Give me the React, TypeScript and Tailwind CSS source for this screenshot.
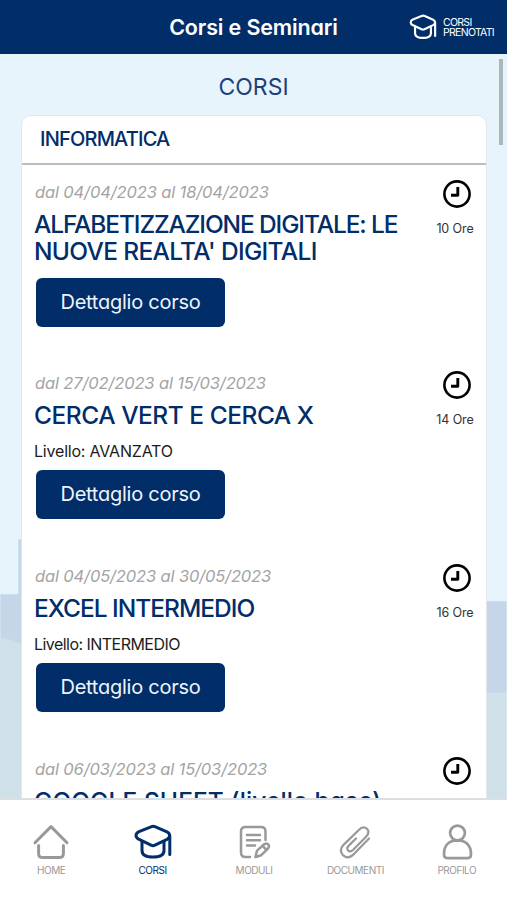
import React from 'react';
import clsx from 'clsx';

interface TitleLine {
  text: string;
  tracking: string;
}

interface Course {
  from: string;
  to: string;
  title: TitleLine[];
  level?: string;
  hours: number;
}

const courses: Course[] = [
  {
    from: '04/04/2023',
    to: '18/04/2023',
    title: [
      { text: 'ALFABETIZZAZIONE DIGITALE: LE', tracking: 'tracking-[-1.12px]' },
      { text: "NUOVE REALTA' DIGITALI", tracking: 'tracking-[-0.67px]' },
    ],
    hours: 10,
  },
  {
    from: '27/02/2023',
    to: '15/03/2023',
    title: [{ text: 'CERCA VERT E CERCA X', tracking: 'tracking-[-0.47px]' }],
    level: 'AVANZATO',
    hours: 14,
  },
  {
    from: '04/05/2023',
    to: '30/05/2023',
    title: [{ text: 'EXCEL INTERMEDIO', tracking: 'tracking-[-1px]' }],
    level: 'INTERMEDIO',
    hours: 16,
  },
  {
    from: '06/03/2023',
    to: '15/03/2023',
    title: [{ text: 'GOOGLE SHEET (livello base)', tracking: 'tracking-[0.08px]' }],
    level: 'BASE',
    hours: 12,
  },
];

interface IconProps {
  className?: string;
}

const CapIcon: React.FC<IconProps> = ({ className }) => (
  <svg viewBox="0 0 38 36" fill="none" stroke="currentColor" strokeLinecap="round" strokeLinejoin="round" className={className}>
    <path d="M17 2.8 5 7.6Q2 9 2 11.6 2 13.9 4.6 15.1L17 21.2Q19 22.2 21 21.2L33 15.4Q35.6 14 35.6 11.6 35.6 9 33 7.8L21.5 2.8Q19 1.8 17 2.8Z" />
    <path d="M8 17.5V26.5Q8 33 19 33T30 26.5V17.5" />
    <path d="M35.8 12V30.5" />
  </svg>
);

const HomeIcon: React.FC<IconProps> = ({ className }) => (
  <svg viewBox="0 0 38 36" fill="none" stroke="currentColor" strokeLinecap="round" strokeLinejoin="round" className={className}>
    <path d="M3 18.8 19 2.6 35 18.8" />
    <path d="M6.6 21.5V29.5Q6.6 33.6 10.8 33.6H27Q31.4 33.6 31.4 29.5V21.5" />
  </svg>
);

const FormIcon: React.FC<IconProps> = ({ className }) => (
  <svg viewBox="0 0 38 36" fill="none" stroke="currentColor" strokeLinecap="round" strokeLinejoin="round" className={className}>
    <path d="M15 33H10.5Q6 33 6 28.5V7.5Q6 3 10.5 3H26Q30.5 3 30.5 7.5V16" />
    <path d="M12 11H25M12 16.2H25M12 21.4H20" />
    <path d="M20.5 33 22 26.6 29.2 20.2Q31.8 18.6 33.4 20.5 34.8 22.6 32.8 24.8L26.2 31.2ZM28 22.2 31 25.6" />
  </svg>
);

const ClipIcon: React.FC<IconProps> = ({ className }) => (
  <svg viewBox="0 0 38 36" fill="none" stroke="currentColor" strokeLinecap="round" strokeLinejoin="round" className={className}>
    <path d="M33 14.5 18.2 29.8C14.6 33.6 10.5 34.3 7.2 31.4 4 28.2 4.2 24.4 7.8 20.6L22.5 6.2C25.4 3.2 28.4 2.6 31 4.8 33.4 7.4 32.6 10.2 29.8 13L17.2 25.8C15.3 27.6 13.4 27.8 12.1 26.4 10.8 25 11.2 23.2 13 21.4L20 14.5" />
  </svg>
);

const ProfileIcon: React.FC<IconProps> = ({ className }) => (
  <svg viewBox="0 0 38 36" fill="none" stroke="currentColor" strokeLinecap="round" strokeLinejoin="round" className={className}>
    <circle cx="19.5" cy="9" r="7.4" />
    <path d="M10 34.2Q6 34.2 6 30.2C6 21.3 11 16.4 19.5 16.4S33 21.3 33 30.2Q33 34.2 29 34.2Z" />
  </svg>
);

const ClockIcon: React.FC = () => (
  <svg viewBox="0 0 28 28" fill="none" stroke="#000" className="ml-[3px] size-7">
    <circle cx="14" cy="14" r="12.6" strokeWidth="2.6" />
    <path d="M14.8 7V15.3H8" strokeWidth="2.9" strokeLinejoin="round" />
  </svg>
);

const tabs = [
  { label: 'HOME', icon: HomeIcon, stroke: 'stroke-3' },
  { label: 'CORSI', icon: CapIcon, stroke: 'stroke-3' },
  { label: 'MODULI', icon: FormIcon, stroke: 'stroke-[2.5]' },
  { label: 'DOCUMENTI', icon: ClipIcon, stroke: 'stroke-[2.2]' },
  { label: 'PROFILO', icon: ProfileIcon, stroke: 'stroke-[2.7]' },
];

const CourseItem: React.FC<{ course: Course }> = ({ course }) => (
  <article className="flex justify-between pl-3 pt-[15px]">
    <div className={clsx('w-[380px]', course.level ? 'pb-[30px]' : 'pb-[29px]')}>
      <p className="pl-px text-[16.5px] italic leading-6 tracking-[-0.14px] text-[#a3a3a3]">
        dal {course.from} al {course.to}
      </p>
      <h3 className="mt-[7px] whitespace-nowrap text-[24.5px] font-medium leading-[27px] text-[#012d69]">
        {course.title.map((line) => (
          <span key={line.text} className={clsx('block', line.tracking)}>
            {line.text}
          </span>
        ))}
      </h3>
      {course.level && (
        <p
          className={clsx(
            'mt-2.5 text-[16px] leading-6 text-[#1c1c1c]',
            course.level === 'INTERMEDIO' ? 'tracking-[-0.54px]' : 'tracking-[-0.2px]'
          )}
        >
          Livello: {course.level}
        </p>
      )}
      <button
        className={clsx(
          'ml-0.5 block h-[49px] w-[189px] rounded-md bg-[#012d69] pb-0.5 text-[20px] tracking-[-0.25px] text-[#eef4fb]',
          course.level ? 'mt-[7px]' : 'mt-[13px]'
        )}
      >
        Dettaglio corso
      </button>
    </div>
    <div className="flex w-[62px] flex-col items-center">
      <ClockIcon />
      <span className="mt-[11px] text-[12.5px] leading-5 tracking-[-0.1px] text-[#333]">{course.hours} Ore</span>
    </div>
  </article>
);

export default function App() {
  return (
    <div className="flex h-[900px] w-[507px] flex-col overflow-hidden bg-white font-['Inter','Liberation_Sans',sans-serif] [font-feature-settings:'cv11']">
      {/* Top bar */}
      <header className="grid h-[54px] shrink-0 grid-cols-[1fr_auto_1fr] items-center bg-[#012d69] text-white">
        <span />
        <h1 className="pt-px text-[21.5px] font-semibold tracking-[-0.15px]">Corsi e Seminari</h1>
        <div className="flex items-center justify-end gap-1.5 pr-[13px]">
          <CapIcon className="h-[26px] w-[28px] stroke-3" />
          <span className="flex w-[51px] flex-col pt-px text-[10.5px] leading-[10px] tracking-[-0.7px]">
            <span>CORSI</span>
            <span>PRENOTATI</span>
          </span>
        </div>
      </header>

      <main className="relative min-h-0 flex-1 overflow-hidden bg-[#e7f4fc]">
        {/* Backdrop */}
        <svg viewBox="0 0 507 745" className="absolute inset-0 h-full w-full">
          <path d="M0 541H18V486H60V745H0Z" fill="#c5d6e8" />
          <rect x="480" y="548" width="27" height="92" fill="#c5d6e8" />
          <path d="M0 585Q12 585 22 592V745H0ZM480 640H507V745H480Z" fill="#cfe0e8" />
        </svg>

        <div className="relative">
          <h2 className="h-[61px] pt-4 text-center text-[23px] leading-[34px] text-[#1b427c]">CORSI</h2>
          <section className="ml-[21px] h-[700px] w-[466px] overflow-hidden rounded-t-[10px] border border-[#e2e6ea] bg-white">
            <div className="flex h-[49px] items-center border-b-2 border-[#bdbdbd] pb-0.5 pl-[18px] text-[20px] font-medium tracking-[-0.8px] text-[#012d69]">
              INFORMATICA
            </div>
            {courses.map((course) => (
              <CourseItem key={course.from + course.hours} course={course} />
            ))}
          </section>
        </div>

        {/* Scroll thumb */}
        <div className="absolute right-[4.5px] top-[5px] h-[86px] w-[4px] bg-[#aab8be]" />
      </main>

      {/* Tab bar */}
      <nav className="grid h-[102px] shrink-0 grid-cols-5 border-t-2 border-[#dcdfe1] bg-white pt-6">
        {tabs.map(({ label, icon: Icon, stroke }) => (
          <a
            key={label}
            className={clsx('flex flex-col items-center pl-px', label === 'CORSI' ? 'text-[#012d69]' : 'text-[#999]')}
          >
            <Icon className={clsx('h-9 w-[38px]', stroke)} />
            <span className="mt-px text-[10px] leading-[18px] tracking-[-0.48px]">{label}</span>
          </a>
        ))}
      </nav>
    </div>
  );
}
